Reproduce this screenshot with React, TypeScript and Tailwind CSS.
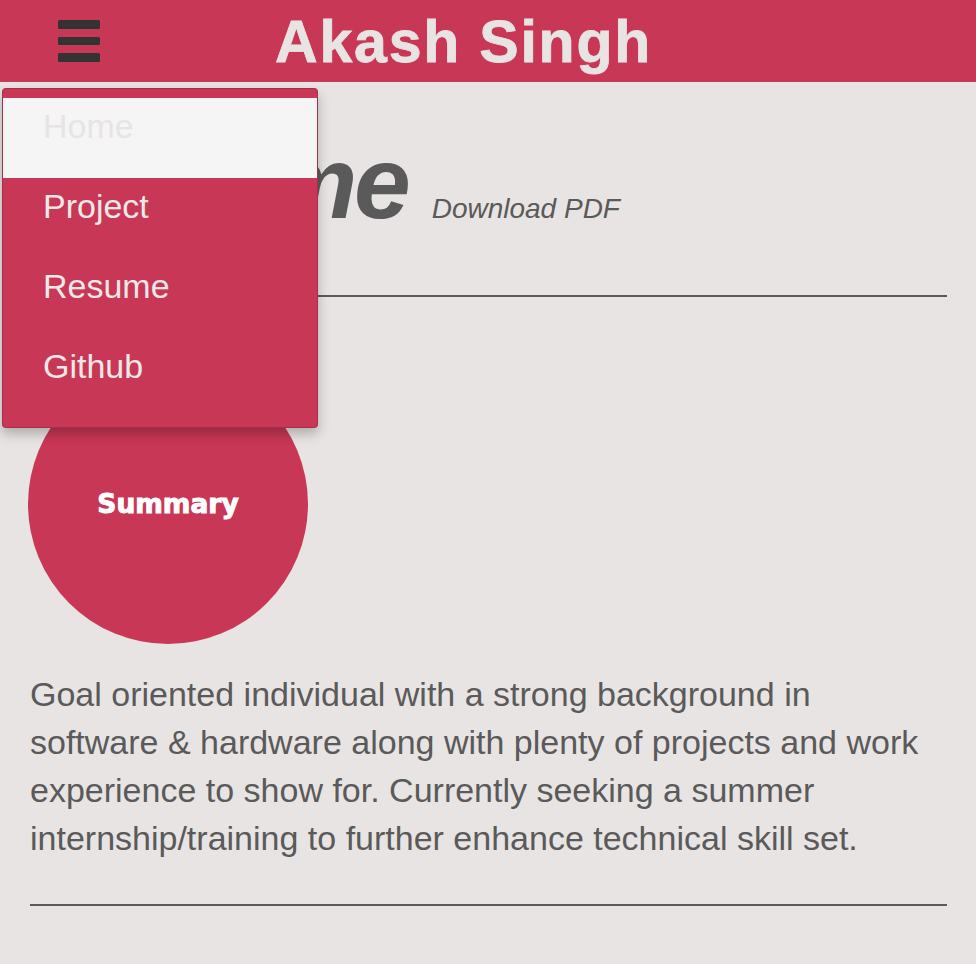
const navItems = ['Home', 'Project', 'Resume', 'Github'];

function Header() {
  return (
    <header className="flex h-[82px] items-start bg-[#c83756]">
      <button type="button" className="ml-[58px] mt-[20px] flex flex-col gap-[8px]">
        <span className="block h-[8.5px] w-[42px] rounded-[1.5px] bg-[#333333]" />
        <span className="block h-[8.5px] w-[42px] rounded-[1.5px] bg-[#333333]" />
        <span className="block h-[8.5px] w-[42px] rounded-[1.5px] bg-[#333333]" />
      </button>
      <h1 className="ml-[175px] mt-[13px] text-[59px] font-bold leading-[58px] tracking-[1.8px] text-[#e8e4e3] [-webkit-text-stroke:0.8px_#e8e4e3]">
        Akash Singh
      </h1>
    </header>
  );
}

function NavMenu() {
  return (
    <ul className="absolute left-[2px] top-[88px] w-[316px] rounded-[4px] border border-black/15 bg-[#c83756] py-[9px] shadow-[0_6px_12px_rgba(0,0,0,0.25)]">
      {navItems.map((item, i) => (
        <li
          key={item}
          className={
            i === 0
              ? 'h-[80px] bg-[#f5f5f5] px-[40px] pt-[4px] text-[34px] leading-[48px] text-[#e8e4e3]'
              : 'h-[80px] px-[40px] pt-[4px] text-[34px] leading-[48px] text-[#ece8e7]'
          }
        >
          {item}
        </li>
      ))}
    </ul>
  );
}

export default function App() {
  return (
    <div className="relative min-h-[964px] overflow-hidden bg-[#e8e4e3] font-['Liberation_Sans',Arial,sans-serif] text-[#5a5a5a]">
      <Header />
      <main className="pl-[30px] pr-[29px] pt-[50px]">
        <div className="flex items-baseline">
          <h2 className="text-[102px] font-bold italic leading-none tracking-[-3.2px]">Resume</h2>
          <a className="ml-[24px] text-[28px] italic">Download PDF</a>
        </div>
        <div className="mt-[61px] h-[2px] bg-[#5a5a5a]" />

        <div className="ml-[-2px] mt-[67px] flex h-[280px] w-[280px] items-center justify-center rounded-full bg-[#c83756]">
          <span className="font-['DejaVu_Sans',sans-serif] text-[26.5px] font-bold text-white [-webkit-text-stroke:1px_white]">
            Summary
          </span>
        </div>

        <p className="mt-[26px] text-[34px] leading-[48px]">
          Goal oriented individual with a strong background in software &amp; hardware along with plenty of
          projects and work experience to show for. Currently seeking a summer internship/training to
          further enhance technical skill set.
        </p>
        <div className="mt-[42px] h-[2px] bg-[#5a5a5a]" />
      </main>
      <NavMenu />
    </div>
  );
}
